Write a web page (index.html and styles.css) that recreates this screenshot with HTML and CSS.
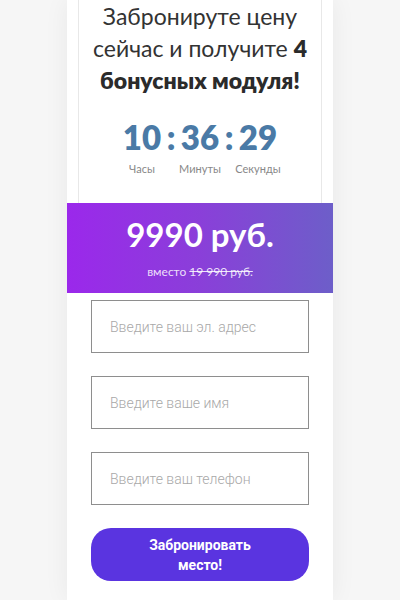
FILE: index.html
```
<!DOCTYPE html>
<html lang="ru">
<head>
<meta charset="utf-8">
<link rel="stylesheet" href="styles.css">
</head>
<body>
<div class="card">
  <div class="offer">
    <h2 class="title">
      <span class="line">Забронируте цену</span>
      <span class="line">сейчас и получите <b class="hl">4</b></span>
      <span class="line"><b>бонусных модуля!</b></span>
    </h2>
    <div class="timer">
      <div class="unit"><span class="num">10</span><span class="lbl">Часы</span></div>
      <span class="sep">:</span>
      <div class="unit"><span class="num">36</span><span class="lbl">Минуты</span></div>
      <span class="sep">:</span>
      <div class="unit"><span class="num">29</span><span class="lbl">Секунды</span></div>
    </div>
  </div>
  <div class="price">
    <div class="now">9990 руб.</div>
    <div class="old">вместо <s>19 990 руб.</s></div>
  </div>
  <form class="form">
    <input class="field" type="text" placeholder="Введите ваш эл. адрес">
    <input class="field" type="text" placeholder="Введите ваше имя">
    <input class="field" type="text" placeholder="Введите ваш телефон">
    <button class="btn" type="button">Забронировать<br>место!</button>
  </form>
</div>
</body>
</html>
```
FILE: styles.css
```
html, body {
  margin: 0;
  padding: 0;
  background: #f6f6f6;
  height: 600px;
  overflow: hidden;
}
.card {
  width: 266px;
  margin: 0 auto;
  background: #fff;
  box-shadow: 0 0 24px rgba(0,0,0,0.06);
  height: 600px;
}
.offer {
  margin: 0 11px;
  border: 1px solid #e8e8e8;
  border-top: none;
  border-bottom: none;
  height: 203px;
  box-sizing: border-box;
}
.title {
  margin: 0;
  display: flex;
  flex-direction: column;
  align-items: center;
  font-family: Lato, "Noto Sans", sans-serif;
  font-weight: 400;
  font-size: 23px;
  line-height: 32px;
  color: #333;
  text-align: center;
}
.line { display: block; white-space: nowrap; }
.title b { font-weight: 800; color: #2b2b2b; }
.title .hl { display: inline-block; line-height: 26px; vertical-align: baseline; }
.timer {
  display: flex;
  justify-content: center;
  align-items: flex-start;
  margin-top: 21px;
  font-family: Lato, "Noto Sans", sans-serif;
  color: #4a7aa6;
}
.unit {
  display: flex;
  flex-direction: column;
  align-items: center;
  width: 38px;
}
.num, .sep {
  font-size: 33px;
  font-weight: 800;
  line-height: 40px;
}
.sep { width: 20px; text-align: center; }
.lbl {
  margin-top: 5px;
  font-size: 11px;
  color: #888;
  white-space: nowrap;
}
.price {
  height: 90px;
  background: linear-gradient(90deg, #9b28eb 0%, #8a3fd9 50%, #6d5ec9 100%);
  color: #fff;
  text-align: center;
  font-family: Lato, "Noto Sans", sans-serif;
  box-sizing: border-box;
  padding-top: 11px;
}
.now {
  font-size: 33px;
  font-weight: 700;
  line-height: 40px;
}
.old {
  margin-top: 10px;
  font-size: 12px;
  color: rgba(255,255,255,0.85);
}
.form {
  display: flex;
  flex-direction: column;
  gap: 23px;
  padding: 7px 24px 0;
}
.field {
  height: 53px;
  margin: 0;
  border: 1.5px solid #8e8e8e;
  padding: 0 18px;
  font-family: Roboto, sans-serif;
  font-weight: 300;
  font-size: 14px;
  color: #333;
  box-sizing: border-box;
  outline: none;
}
.field::placeholder { color: #a8a8a8; }
.btn {
  height: 53px;
  border: none;
  border-radius: 20px;
  background: #5a34e0;
  color: #fff;
  font-family: Roboto, sans-serif;
  font-weight: 700;
  font-size: 14px;
  line-height: 20px;
}
```
